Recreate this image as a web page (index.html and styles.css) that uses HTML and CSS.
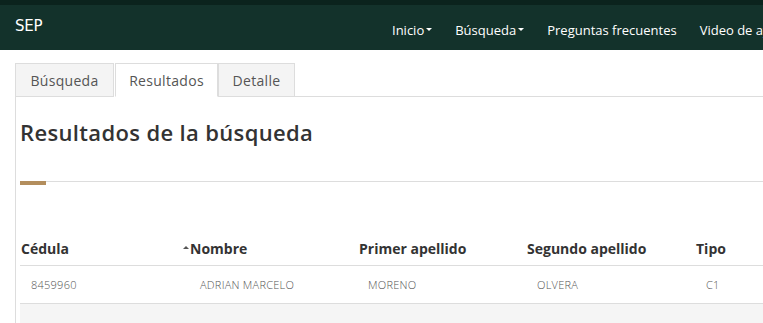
FILE: index.html
```html
<!DOCTYPE html>
<html lang="es">
<head>
<meta charset="utf-8">
<link rel="stylesheet" href="styles.css">
<title>SEP</title>
</head>
<body>
<div class="page">
  <div class="topstrip"></div>
  <header class="navbar">
    <div class="brand">SEP</div>
    <ul class="nav">
      <li>Inicio<span class="caret"></span></li>
      <li>Búsqueda<span class="caret"></span></li>
      <li>Preguntas frecuentes</li>
      <li>Video de ayuda</li>
    </ul>
  </header>
  <main class="content">
    <ul class="tabs">
      <li class="tab">Búsqueda</li>
      <li class="tab active">Resultados</li>
      <li class="tab">Detalle</li>
      <li class="tab-fill"></li>
    </ul>
    <section class="panel">
      <h2 class="title">Resultados de la búsqueda</h2>
      <div class="rule"><span class="rule-accent"></span></div>
      <table class="results">
        <colgroup>
          <col class="c1"><col class="c2"><col class="c3"><col class="c4"><col class="c5">
        </colgroup>
        <thead>
          <tr>
            <th>Cédula</th>
            <th class="sorted"><span class="sort-up"></span>Nombre</th>
            <th>Primer apellido</th>
            <th>Segundo apellido</th>
            <th>Tipo</th>
          </tr>
        </thead>
        <tbody>
          <tr>
            <td>8459960</td>
            <td>ADRIAN MARCELO</td>
            <td>MORENO</td>
            <td>OLVERA</td>
            <td>C1</td>
          </tr>
          <tr class="odd">
            <td>&nbsp;</td><td></td><td></td><td></td><td></td>
          </tr>
        </tbody>
      </table>
    </section>
  </main>
</div>
</body>
</html>
```

FILE: styles.css
```css
html, body {
  margin: 0;
  padding: 0;
  background: #ffffff;
  overflow: hidden;
}

.page {
  width: 1000px;
  font-family: "Open Sans", "Liberation Sans", sans-serif;
  color: #333333;
}

.topstrip {
  height: 5px;
  background: #0b231d;
}

.navbar {
  height: 45px;
  background: #13322b;
  display: flex;
  align-items: center;
  padding-left: 15px;
  color: #ffffff;
}

.brand {
  font-family: "DejaVu Sans", "Open Sans", sans-serif;
  font-size: 15px;
  letter-spacing: -0.2px;
  width: 366px;
  margin-top: -3px;
}

.nav {
  list-style: none;
  margin: 0;
  padding: 0;
  display: flex;
  gap: 23px;
  font-family: "Open Sans", sans-serif;
  font-size: 13px;
  font-weight: 500;
  margin-left: 11px;
  margin-top: 4px;
}

.nav li {
  display: flex;
  align-items: center;
  white-space: nowrap;
}

.caret {
  display: inline-block;
  width: 0;
  height: 0;
  margin-left: 2px;
  border-left: 3px solid transparent;
  border-right: 3px solid transparent;
  border-top: 3px solid #ffffff;
}

.content {
  padding-left: 15px;
  padding-top: 13px;
}

.tabs {
  list-style: none;
  margin: 0;
  padding: 0;
  display: flex;
  height: 34px;
}

.tab {
  box-sizing: border-box;
  height: 34px;
  padding: 0 17px;
  display: flex;
  align-items: center;
  font-size: 14px;
  color: #555555;
  background: #f4f4f4;
  border: 1px solid #dddddd;
  border-bottom: 1px solid #dddddd;
  letter-spacing: 0.3px;
}

.tab + .tab {
  margin-left: 1px;
}

.tab.active {
  background: #ffffff;
  border-bottom-color: #ffffff;
  width: 103px;
  justify-content: center;
  padding: 0;
}

.tab:first-child {
  width: 99px;
  justify-content: center;
  padding: 0;
}

.tab:nth-child(3) {
  width: 77px;
  justify-content: center;
  padding: 0;
  margin-left: 0;
}

.tab-fill {
  flex: 1;
  border-bottom: 1px solid #dddddd;
}

.panel {
  border-left: 1px solid #dddddd;
  padding: 19px 0 0 4px;
}

.title {
  margin: 0;
  font-size: 22px;
  line-height: 32px;
  font-weight: 600;
  color: #333333;
  letter-spacing: 0.35px;
}

.rule {
  margin-top: 33px;
  height: 4px;
  border-top: 1px solid #dddddd;
  position: relative;
}

.rule-accent {
  position: absolute;
  left: 0;
  top: -1px;
  width: 26px;
  height: 4px;
  background: #b38e5d;
}

.results {
  margin-top: 47px;
  border-collapse: collapse;
  table-layout: fixed;
  width: 900px;
}

.c1 { width: 162px; }
.c2 { width: 176px; }
.c3 { width: 168px; }
.c4 { width: 169px; }
.c5 { width: 225px; }

.results th {
  text-align: left;
  font-size: 14px;
  font-weight: 700;
  color: #333333;
  padding: 0 0 7px 1px;
  height: 25px;
  vertical-align: bottom;
  border-bottom: 1px solid #dddddd;
}

.sort-up {
  display: inline-block;
  width: 0;
  height: 0;
  border-left: 3px solid transparent;
  border-right: 3px solid transparent;
  border-bottom: 3px solid #555555;
  margin-right: 1px;
  vertical-align: 5px;
}

.results td {
  font-size: 11px;
  font-weight: 300;
  color: #555555;
  height: 37px;
  padding: 0 0 0 11px;
  border-bottom: 1px solid #dddddd;
  letter-spacing: 0.25px;
}

.results td:nth-child(2) { padding-left: 18px; }
.results td:nth-child(3) { padding-left: 10px; }

.results tr.odd td {
  background: #f5f5f5;
  border-bottom: none;
}
```
